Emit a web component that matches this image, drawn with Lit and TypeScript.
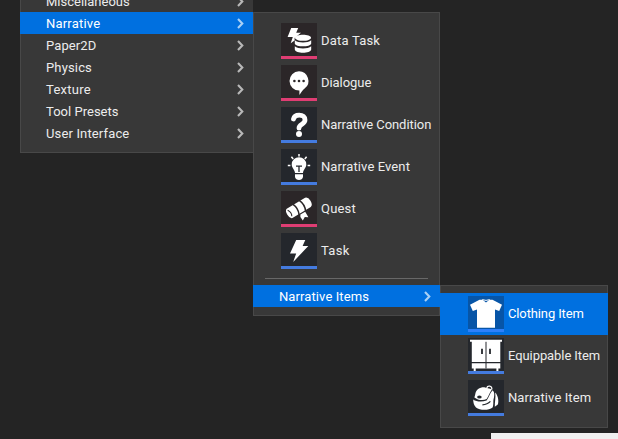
import { LitElement, html, css, svg, nothing } from "lit";
import { customElement, property } from "lit/decorators.js";
import { classMap } from "lit/directives/class-map.js";
import { styleMap } from "lit/directives/style-map.js";

const icons: Record<string, unknown> = {
  dataTask: svg`
    <path d="M10.2 5H17.2L15.2 9.8H20L13.6 15V17.5L9.7 20.2L11.8 14H6.6Z" />
    <path d="M14 14.7C14 10.6 30 10.6 30 14.7C30 18.8 14 18.8 14 14.7Z" />
    <path d="M13.8 17.3C17 20.3 27 20.3 30.2 17.3V20.4C29.5 24.2 14.5 24.2 13.8 20.4Z" />
    <path d="M13.8 23.3C17 26.3 27 26.3 30.2 23.3V26.4C29.5 30.8 14.5 30.8 13.8 26.4Z" />`,
  dialogue: svg`
    <path d="M18 6.2A9.7 9.7 0 0 1 23.6 23.6C21.6 25 20.4 27.6 18.4 30V25.6A9.7 9.7 0 1 1 18 6.2Z" />
    <g class="cut"><circle cx="13.4" cy="16" r="1.3" /><circle cx="18" cy="16" r="1.3" /><circle cx="22.6" cy="16" r="1.3" /></g>`,
  condition: svg`
    <path class="line" stroke-width="4.8" stroke-linecap="round" d="M12.5 12C13 9.4 15 8.2 18.2 8.2C21.8 8.2 24 10 24 13C24 17.4 18 17 18 21.2" />
    <circle cx="18" cy="27" r="3" />`,
  event: svg`
    <path d="M18 8.2A7.3 7.3 0 0 1 25.3 15.5C25.3 19 22.2 20.4 22 24H14C13.8 20.4 10.7 19 10.7 15.5A7.3 7.3 0 0 1 18 8.2Z" />
    <path d="M14 25.2H22V28C21.6 30 20 31 18 31S14.4 30 14 28Z" />
    <path class="line" stroke-width="1.5" d="M18 5V7.5M10.4 7.7L12.2 10M25.6 7.7L23.8 10M6.8 16.4H9.4M26.6 16.4H29.2" />
    <path class="gap" stroke-width="1.3" d="M15 17.2H21M18 17.2V23" />`,
  quest: svg`
    <g transform="rotate(-31 18 16.7)">
      <path d="M7 11.2H28.4Q31.4 11.8 31.4 16.7T28.4 22.2H7Q4.4 21.6 4.4 16.7T7 11.2Z" />
      <path class="gap" stroke-width="1.5" d="M14.4 10.5Q17.2 16.7 14.4 23M22 10.5Q24.8 16.7 22 23" />
      <path class="gap" stroke-width="1.1" d="M7 13Q9.6 16.7 7.4 20.4" />
    </g>
    <path d="M19.4 23.6L24.2 20.8L27.4 26.2L23.8 25.9L21.8 29.4L19.4 26Z" />`,
  task: svg`<path d="M15.2 7H24.3L21.6 13H27.3L12.2 29L15.2 20.4H9Z" />`,
  clothing: svg`<path d="M2 8.8L11.5 3.8H14.6L18 6.4L21.4 3.8H24.5L34 8.8L31.2 15L27 13.6V31.8H9V13.6L4.8 15Z" />
    <path class="line" stroke-width="1" d="M14.3 3.6Q18 5.2 21.7 3.6" />`,
  equippable: svg`
    <path d="M2 1.8H34V3.8H32.3V24H3.8V3.8H2Z" />
    <path d="M3.8 25.3H32.3V30.5H30.4V33H28.4V30.5H7.7V33H5.7V30.5H3.8Z" />
    <path class="gap" stroke-width="1" d="M18 3.8V30.5" />
    <path class="gap" stroke-width="1.8" d="M14 10.8V16M22 10.8V16" />`,
  backpack: svg`
    <path class="line" stroke-width="1.3" d="M18.8 8C19.4 5.4 24.4 5.4 23.8 9.4" />
    <path d="M7.2 14.4C8 9.6 12 7 17 7.4L24 9.2C21.6 12.4 21 15.6 18.6 19C15 20.8 9.6 20 6.4 17.4Z" />
    <path d="M5.2 19.4C8.4 21.8 13.6 22.2 18.6 20.6C21 17.4 21.6 13.4 24.6 10.2C27.2 12.6 26.2 16.6 25.4 20C25.2 23 25.6 25.2 24.6 27.4C21 30.4 12 30.6 8 27.4C6 25.4 5.2 22.4 5.2 19.4Z" />
    <path d="M27.2 12.4C29.8 15 31.2 20.6 29.8 24.6L26.8 26.8C26.6 22 28 18 27.2 12.4Z" />
    <path class="gap" stroke-width="1.2" d="M14.4 24.8Q19.4 24.6 22.4 21.4" />
    <ellipse class="cut" cx="11.4" cy="17" rx="2.3" ry="1.5" />`,
};

/** A menu entry; tracking is the letter spacing of its label in pixels. */
interface Entry { label: string; tracking: number; active?: boolean; }
interface Asset extends Entry { icon: string; tone: "pink" | "blue"; }

const categories: Entry[] = [
  { label: "Miscellaneous", tracking: 0 },
  { label: "Narrative", tracking: 0.2, active: true },
  { label: "Paper2D", tracking: 0.1 },
  { label: "Physics", tracking: 0.15 },
  { label: "Texture", tracking: 0.25 },
  { label: "Tool Presets", tracking: 0.02 },
  { label: "User Interface", tracking: 0.15 },
];

const narrative: Asset[] = [
  { label: "Data Task", tracking: 0.2, icon: "dataTask", tone: "pink" },
  { label: "Dialogue", tracking: -0.05, icon: "dialogue", tone: "pink" },
  { label: "Narrative Condition", tracking: -0.05, icon: "condition", tone: "blue" },
  { label: "Narrative Event", tracking: 0.1, icon: "event", tone: "blue" },
  { label: "Quest", tracking: 0.2, icon: "quest", tone: "pink" },
  { label: "Task", tracking: 0.3, icon: "task", tone: "blue" },
];

const itemsEntry: Entry = { label: "Narrative Items", tracking: 0.1, active: true };

const items: Asset[] = [
  { label: "Clothing Item", tracking: -0.13, icon: "clothing", tone: "blue", active: true },
  { label: "Equippable Item", tracking: -0.08, icon: "equippable", tone: "blue" },
  { label: "Narrative Item", tracking: 0.1, icon: "backpack", tone: "blue" },
];

const spacing = (entry: Entry) => styleMap({ letterSpacing: `${entry.tracking}px` });

@customElement("submenu-row")
class SubmenuRow extends LitElement {
  @property({ attribute: false }) entry!: Entry;
  static styles = css`
    :host { display: block; }
    .row { display: flex; align-items: center; justify-content: space-between; height: 22px; padding: 0 9px 0 26px; }
    .row.active { background: #0070e0; color: #fff; }
    span { padding-top: 2px; }
    svg { display: block; width: 7px; height: 11px; fill: none; stroke: #b8b8b8; stroke-width: 2.1; }
    .active svg { stroke: #a9d0f5; }
  `;
  render() {
    return html`<div class=${classMap({ row: true, active: !!this.entry.active })}>
      <span style=${spacing(this.entry)}>${this.entry.label}</span>
      <svg viewBox="0 0 7 11"><path d="M1 1L5.3 5.5L1 10" /></svg>
    </div>`;
  }
}

@customElement("asset-row")
class AssetRow extends LitElement {
  @property({ attribute: false }) asset!: Asset;
  static styles = css`
    :host { display: block; }
    .row { display: flex; align-items: center; gap: 4px; height: 42px; padding-left: 28px; white-space: nowrap; }
    .row.active { background: #0070e0; color: #fff; }
    .thumb { box-sizing: border-box; width: 36px; height: 36px; background: var(--tile); border-bottom: 3px solid var(--bar); }
    .pink { --tile: #2b2628; --bar: #df3d73; }
    .blue { --tile: #24272c; --bar: #447bdf; }
    .active .blue { --tile: #0755a7; --bar: #2e80fa; }
    svg { display: block; width: 36px; height: 33px; fill: #fff; }
    .cut { fill: var(--tile); }
    .line { fill: none; stroke: #fff; }
    .gap { fill: none; stroke: var(--tile); }
  `;
  render() {
    const { label, icon, tone, active } = this.asset;
    return html`<div class=${classMap({ row: true, active: !!active })}>
      <div class=${classMap({ thumb: true, [tone]: true })}><svg viewBox="0 0 36 33">${icons[icon] ?? nothing}</svg></div>
      <span style=${spacing(this.asset)}>${label}</span>
    </div>`;
  }
}

@customElement("app-root")
class AppRoot extends LitElement {
  static styles = css`
    :host { display: block; position: relative; width: 618px; height: 439px; overflow: hidden; background: #242424; color: #ececec; font: 13px/20px Roboto, sans-serif; }
    .menu { position: absolute; box-sizing: border-box; background: #383838; border: 1px solid #484848; }
    .menu submenu-row, .menu asset-row { margin: 0 -1px; }
    .categories { left: 20px; top: -20px; width: 233px; height: 173px; padding-top: 9px; border-right: 0; }
    .categories submenu-row { margin-right: 0; }
    .narrative { left: 253px; top: 12px; width: 187px; height: 304px; padding-top: 7px; }
    .items { left: 440px; top: 285px; width: 168px; height: 143px; padding-top: 7px; }
    .rule { height: 1px; margin: 6px 11px; background: #686868; }
    .panel { position: absolute; left: 491px; top: 433px; width: 127px; height: 6px; background: #f0f0f0; }
  `;
  render() {
    return html`
      <div class="menu categories">
        ${categories.map((c) => html`<submenu-row .entry=${c}></submenu-row>`)}
      </div>
      <div class="menu narrative">
        ${narrative.map((a) => html`<asset-row .asset=${a}></asset-row>`)}
        <div class="rule"></div>
        <submenu-row .entry=${itemsEntry}></submenu-row>
      </div>
      <div class="menu items">${items.map((a) => html`<asset-row .asset=${a}></asset-row>`)}</div>
      <div class="panel"></div>`;
  }
}
